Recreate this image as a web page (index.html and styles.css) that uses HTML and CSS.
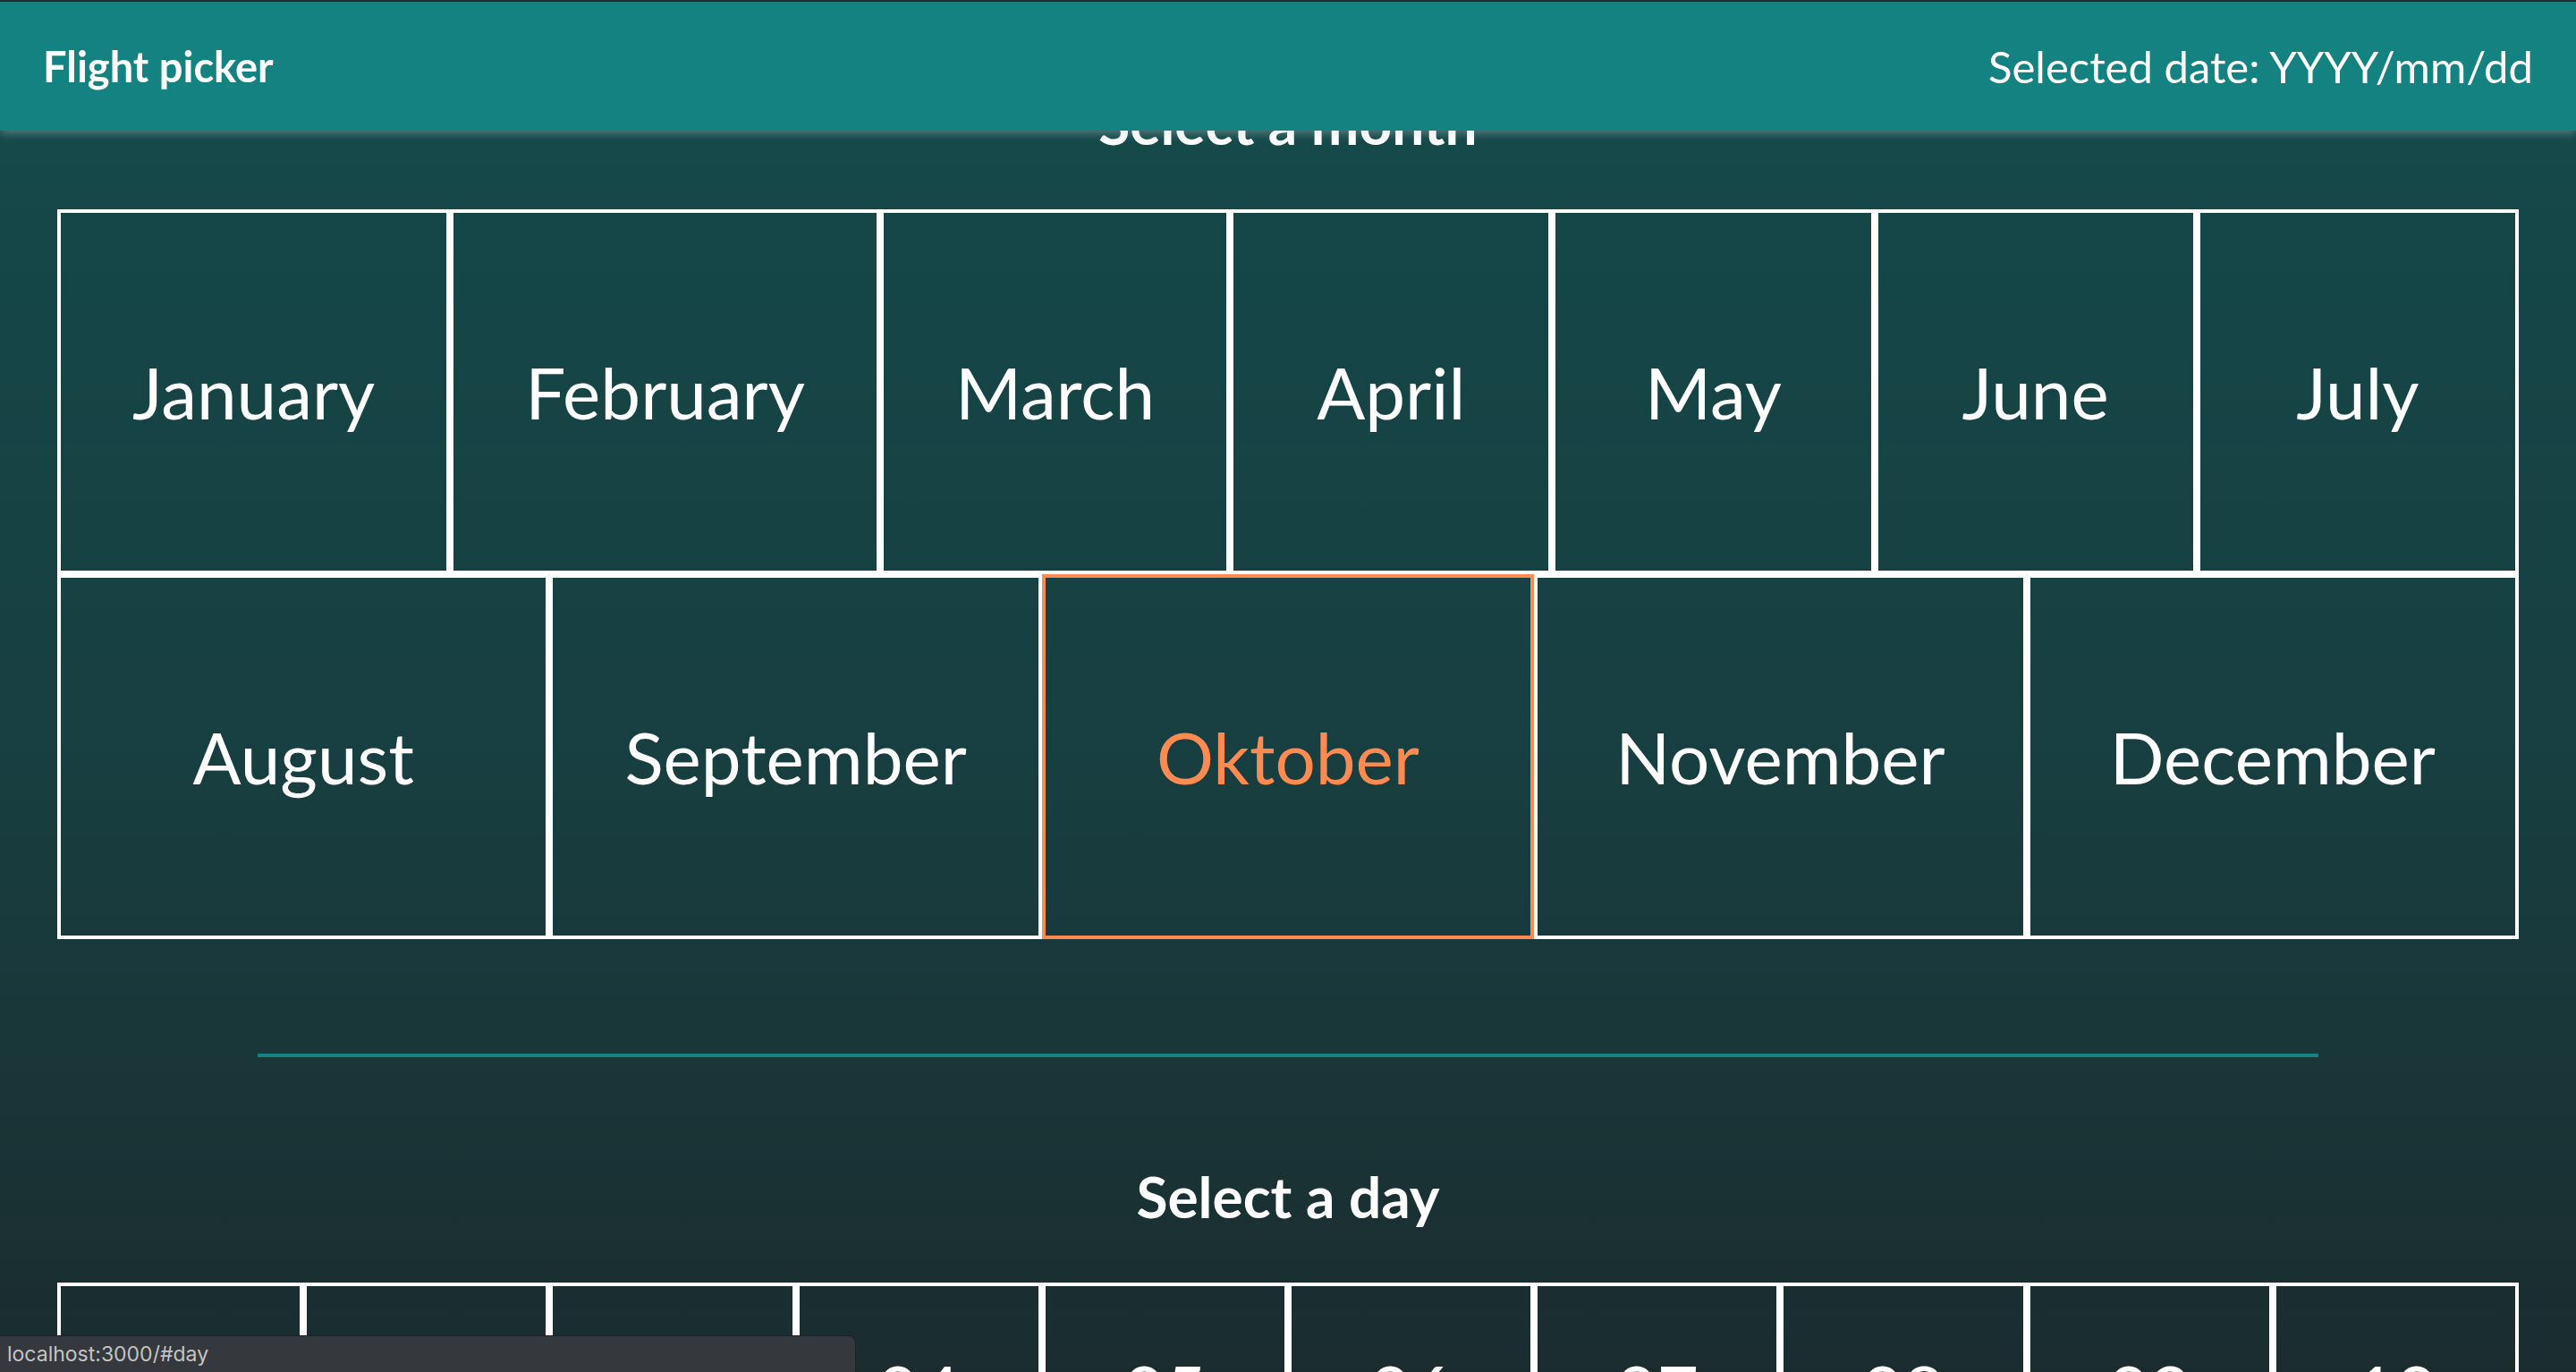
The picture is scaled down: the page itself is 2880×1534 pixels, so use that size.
FILE: index.html
```html
<!DOCTYPE html>
<html lang="en">
<head>
<meta charset="utf-8">
<title>Flight picker</title>
<link rel="stylesheet" href="styles.css">
</head>
<body>
<header class="topbar">
  <div class="brand">Flight picker</div>
  <div class="selected">Selected date: YYYY/mm/dd</div>
</header>

<main class="content">
  <section class="picker" id="month">
    <h2 class="picker-title">Select a month</h2>
    <div class="month-grid">
      <div class="month-row">
        <a class="cell month" href="#day">January</a>
        <a class="cell month" href="#day">February</a>
        <a class="cell month" href="#day">March</a>
        <a class="cell month" href="#day">April</a>
        <a class="cell month" href="#day">May</a>
        <a class="cell month" href="#day">June</a>
        <a class="cell month" href="#day">July</a>
      </div>
      <div class="month-row">
        <a class="cell month" href="#day">August</a>
        <a class="cell month" href="#day">September</a>
        <a class="cell month is-selected" href="#day">Oktober</a>
        <a class="cell month" href="#day">November</a>
        <a class="cell month" href="#day">December</a>
      </div>
    </div>
  </section>

  <hr class="divider">

  <section class="picker" id="day">
    <h2 class="picker-title">Select a day</h2>
    <div class="day-grid">
      <a class="cell day" href="#day">01</a>
      <a class="cell day" href="#day">02</a>
      <a class="cell day" href="#day">03</a>
      <a class="cell day" href="#day">04</a>
      <a class="cell day" href="#day">05</a>
      <a class="cell day" href="#day">06</a>
      <a class="cell day" href="#day">07</a>
      <a class="cell day" href="#day">08</a>
      <a class="cell day" href="#day">09</a>
      <a class="cell day" href="#day">10</a>
      <a class="cell day" href="#day">11</a>
      <a class="cell day" href="#day">12</a>
      <a class="cell day" href="#day">13</a>
      <a class="cell day" href="#day">14</a>
      <a class="cell day" href="#day">15</a>
      <a class="cell day" href="#day">16</a>
      <a class="cell day" href="#day">17</a>
      <a class="cell day" href="#day">18</a>
      <a class="cell day" href="#day">19</a>
      <a class="cell day" href="#day">20</a>
      <a class="cell day" href="#day">21</a>
      <a class="cell day" href="#day">22</a>
      <a class="cell day" href="#day">23</a>
      <a class="cell day" href="#day">24</a>
      <a class="cell day" href="#day">25</a>
      <a class="cell day" href="#day">26</a>
      <a class="cell day" href="#day">27</a>
      <a class="cell day" href="#day">28</a>
      <a class="cell day" href="#day">29</a>
      <a class="cell day" href="#day">30</a>
      <a class="cell day" href="#day">31</a>
    </div>
  </section>
</main>

<div class="statusbar">localhost:3000/#day</div>
</body>
</html>
```

FILE: styles.css
```css
html {
  background: linear-gradient(to bottom, #144b4c 0%, #183d3f 60%, #1b2c2f 100%) fixed;
  min-height: 100%;
}

body {
  margin: 0;
  font-family: Lato, "Open Sans", "Liberation Sans", sans-serif;
  color: #ffffff;
}

.topbar {
  position: fixed;
  top: 0;
  left: 0;
  right: 0;
  z-index: 10;
  height: 144px;
  border-top: 2px solid #272b2c;
  padding: 0 48px 0 48px;
  display: flex;
  align-items: center;
  justify-content: space-between;
  background: #138280;
  box-shadow: 0 3px 10px rgba(190, 205, 205, 0.40);
}

.brand {
  font-size: 47px;
  font-weight: 700;
}

.selected {
  font-size: 49px;
  font-weight: 400;
}

.content {
  padding: 100px 64px 0 64px;
}

.picker-title {
  margin: 0 0 57px 0;
  font-size: 64px;
  line-height: 1.2;
  font-weight: 700;
  text-align: center;
}

.month-grid {
  display: flex;
  flex-direction: column;
}

.month-row {
  display: flex;
}

.cell {
  box-sizing: border-box;
  border: 4px solid #ffffff;
  display: flex;
  align-items: center;
  justify-content: center;
  color: #ffffff;
  text-decoration: none;
  font-size: 80px;
  white-space: nowrap;
}

.month {
  flex: 1 1 0;
  height: 408px;
  padding: 0 80px;
}

.month.is-selected {
  color: #fd8a50;
  border-color: #fd8a50;
}

.divider {
  width: 80vw;
  height: 4px;
  margin: 128px auto 118px auto;
  border: 0;
  background: #138280;
}

.day-grid {
  display: grid;
  grid-template-columns: repeat(10, 1fr);
}

.day {
  height: 240px;
}

.statusbar {
  position: fixed;
  left: 0;
  bottom: 0;
  z-index: 20;
  box-sizing: border-box;
  width: 957px;
  height: 41px;
  padding: 0 8px;
  display: flex;
  align-items: center;
  background: #35383c;
  border-top: 1px solid #1e2022;
  border-right: 1px solid #1e2022;
  border-top-right-radius: 8px;
  color: #c4c4c4;
  font-family: Inter, "Liberation Sans", sans-serif;
  font-size: 23px;
}
```
